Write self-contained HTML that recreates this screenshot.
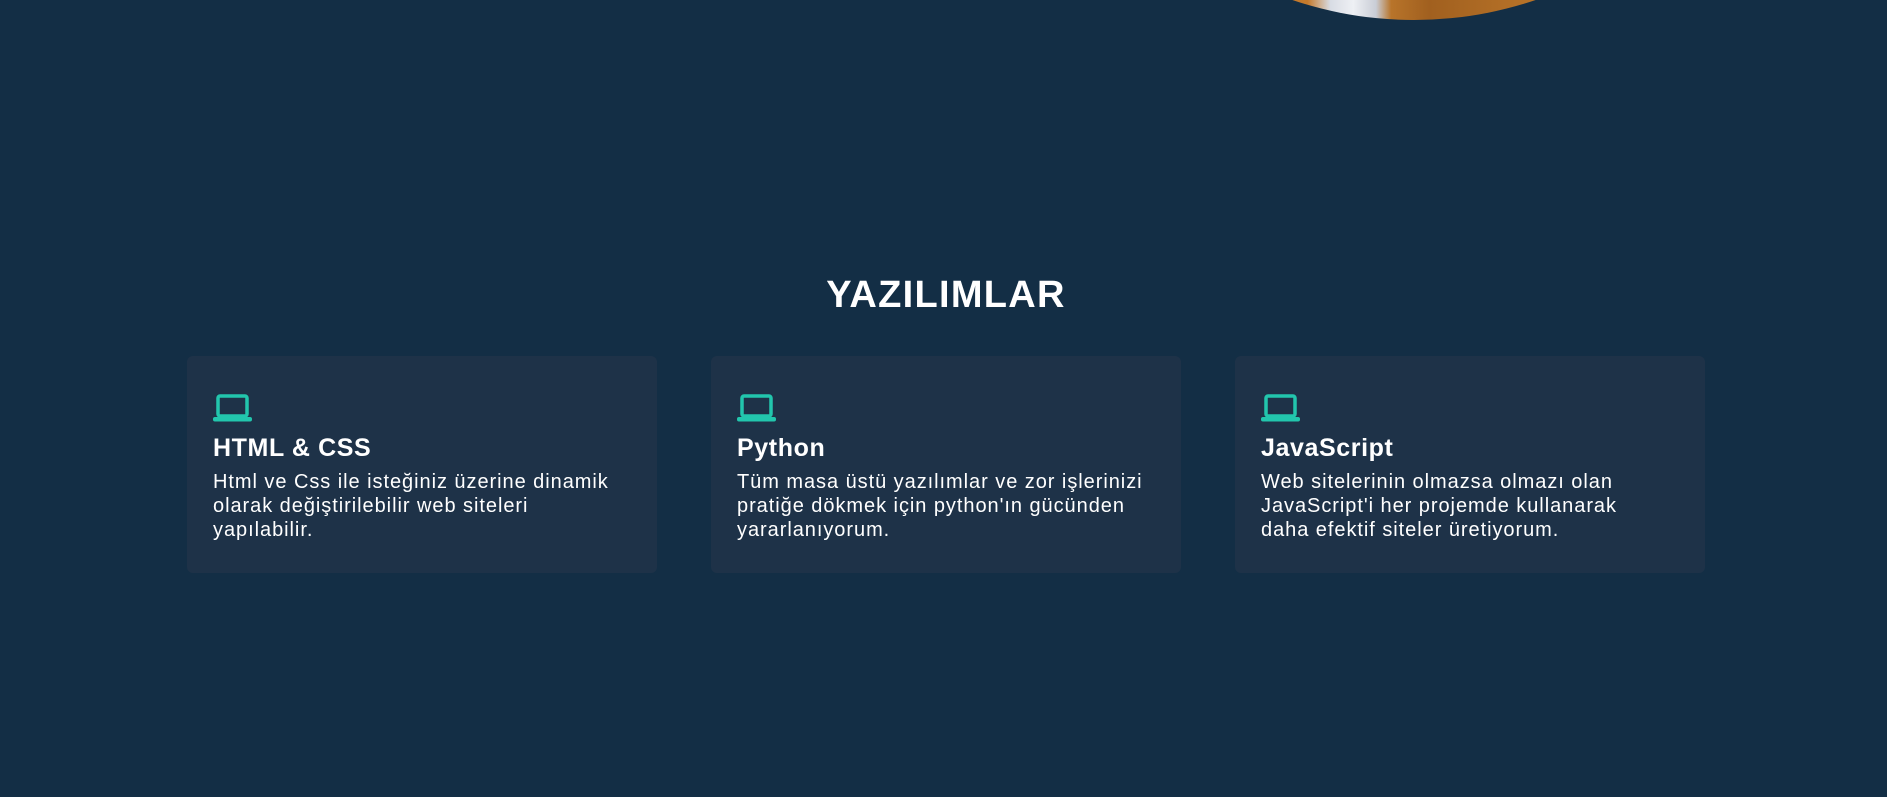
<!DOCTYPE html>
<html><head><meta charset="utf-8"><style>
body{margin:0;width:1887px;height:797px;background:#132e45;overflow:hidden;font-family:"Liberation Sans",sans-serif;color:#fff;position:relative}
.img{position:absolute;left:1034px;top:-740px;width:760px;height:760px;border-radius:50%;overflow:hidden;background:linear-gradient(90deg,#9a5a1c,#b86e24 20%,#c57a2c 36%,#d8dce4 39%,#eef0f4 42%,#c9cdd6 45%,#b8742a 47%,#a1601f 52%,#c7802f 75%,#9a5a1c)}
h2{position:absolute;top:274px;left:0;width:1892px;text-align:center;margin:0;font-size:38px;font-weight:bold;letter-spacing:1.3px}
.card{position:absolute;top:356px;width:470px;height:217px;background:#1e3248;border-radius:6px}
.card svg{position:absolute;left:26px;top:38px}
.card h3{position:absolute;left:26px;top:78px;margin:0;font-size:25px;font-weight:bold;letter-spacing:.6px}
.card p{position:absolute;left:26px;top:114px;margin:0;font-size:20px;line-height:24px;width:440px;letter-spacing:.95px;white-space:nowrap}
</style></head><body>
<div class="img"></div>
<h2>YAZILIMLAR</h2>
<div class="card" style="left:187px">
<svg width="40" height="28" viewBox="0 0 40 28"><rect x="5" y="2" width="29" height="20" rx="2" fill="none" stroke="#22c6ad" stroke-width="3.5"/><rect x="0" y="23" width="39" height="4.5" rx="2" fill="#22c6ad"/></svg>
<h3>HTML &amp; CSS</h3>
<p>Html ve Css ile isteğiniz üzerine dinamik<br>olarak değiştirilebilir web siteleri<br>yapılabilir.</p></div>
<div class="card" style="left:711px">
<svg width="40" height="28" viewBox="0 0 40 28"><rect x="5" y="2" width="29" height="20" rx="2" fill="none" stroke="#22c6ad" stroke-width="3.5"/><rect x="0" y="23" width="39" height="4.5" rx="2" fill="#22c6ad"/></svg>
<h3>Python</h3>
<p>Tüm masa üstü yazılımlar ve zor işlerinizi<br>pratiğe dökmek için python'ın gücünden<br>yararlanıyorum.</p></div>
<div class="card" style="left:1235px">
<svg width="40" height="28" viewBox="0 0 40 28"><rect x="5" y="2" width="29" height="20" rx="2" fill="none" stroke="#22c6ad" stroke-width="3.5"/><rect x="0" y="23" width="39" height="4.5" rx="2" fill="#22c6ad"/></svg>
<h3>JavaScript</h3>
<p>Web sitelerinin olmazsa olmazı olan<br>JavaScript'i her projemde kullanarak<br>daha efektif siteler üretiyorum.</p></div>
</body></html>
